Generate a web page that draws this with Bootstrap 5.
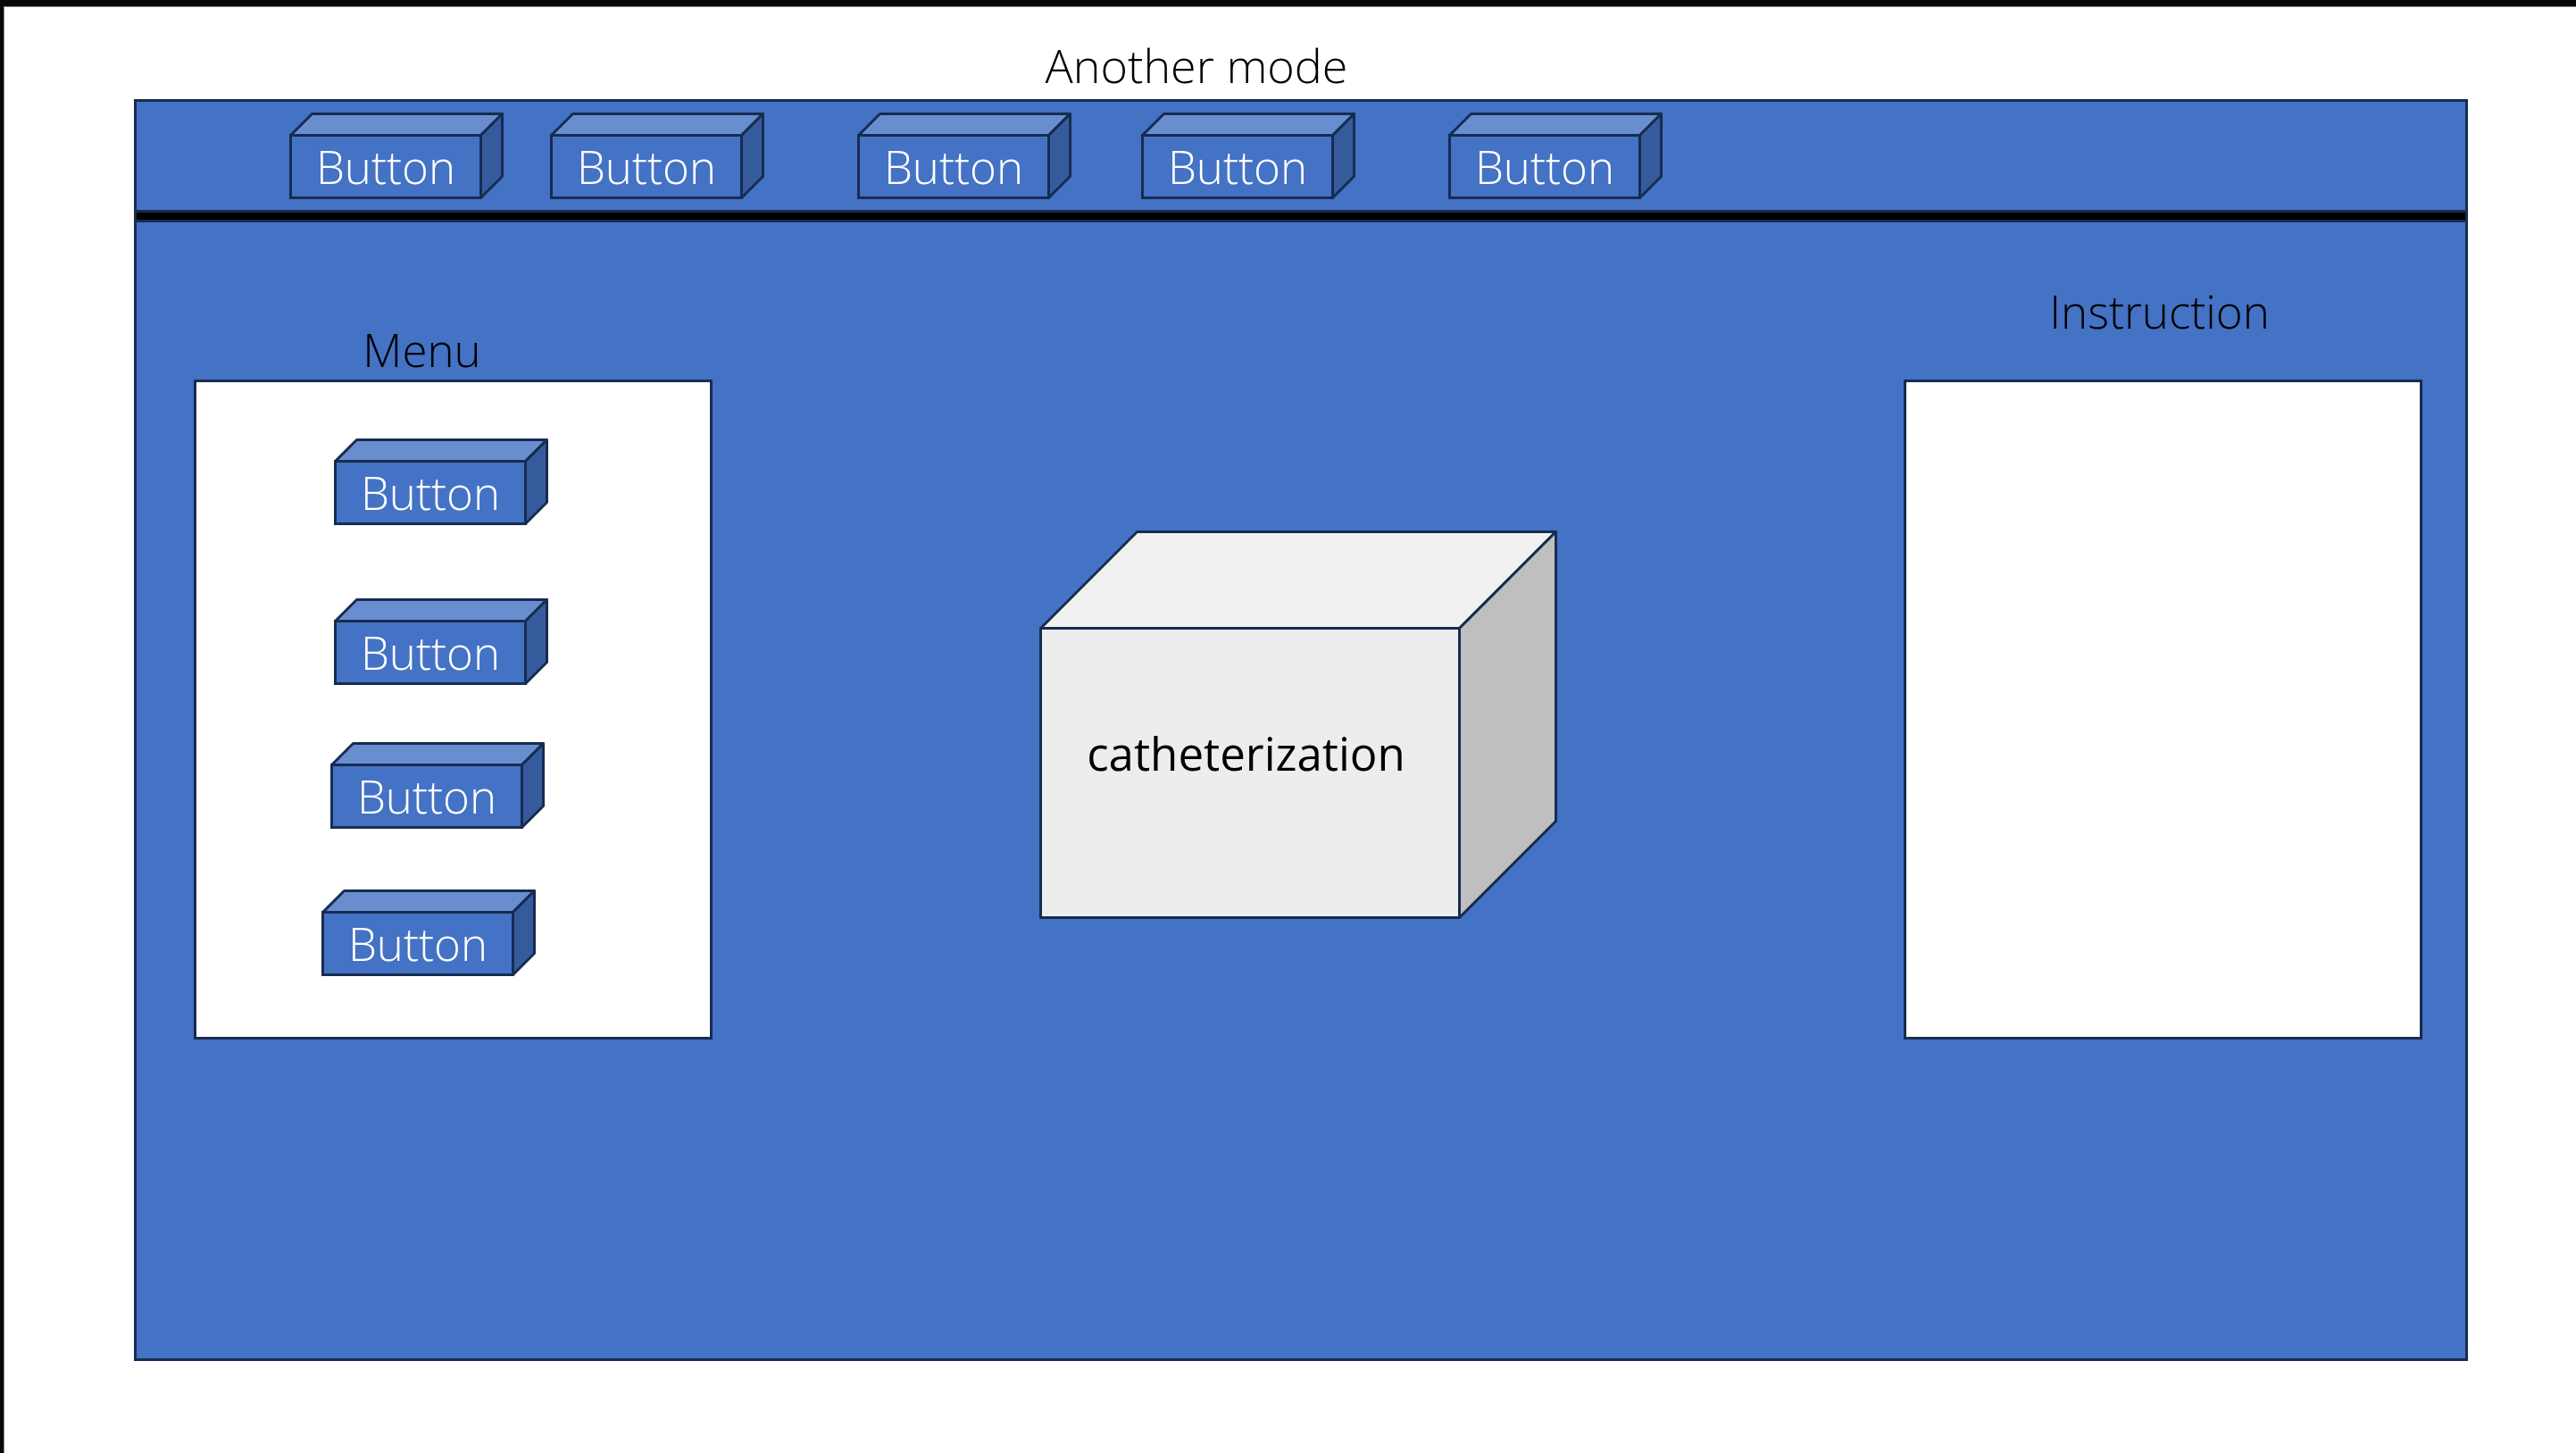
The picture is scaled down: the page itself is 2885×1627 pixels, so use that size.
<!DOCTYPE html>
<html lang="en">
<head>
<meta charset="utf-8">
<meta name="viewport" content="width=device-width, initial-scale=1">
<title>Another mode</title>
<link href="https://cdn.jsdelivr.net/npm/bootstrap@5.3.0/dist/css/bootstrap.min.css" rel="stylesheet">
<style>
  :root { --ink: #172c51; --board: #4472c4; }
  body {
    font-family: "Open Sans", "Noto Sans", sans-serif;
    font-size: 51px;
    font-weight: 300;
    line-height: 60px;
    color: #000;
    background: #fff;
  }
  .slide {
    border-top: 7px solid #080808;
    border-left: 4px solid #080808;
    box-shadow: inset 1px 1px 0 #8a8a8a;
    padding: 36px 121px 103px 146px;
  }
  .slide-title, .panel-title { font: inherit; margin: 0; }
  .slide-title { font-size: 52px; padding-right: 234px; margin-bottom: 8px; }
  .board { background: var(--board); border: 3px solid var(--ink); }
  .toolbar { padding: 12px 24px 12px 171px; }
  .divider { height: 14px; background: #000; border: solid var(--ink); border-width: 3px 0; }
  .stage { padding: 69px 48px 0 64px; }
  .panel { width: 581px; }
  .panel-box { height: 739px; background: #fff; border: 3px solid var(--ink); }
  .menu-title { padding-right: 70px; margin-bottom: 4px; }
  .instruction-title { padding-right: 8px; margin-bottom: 47px; }
  .menu-list { padding: 63px 0 0 140px; }

  /* Extruded blocks: outline drawn by an SVG behind the label */
  .block3d {
    position: relative;
    flex: none;
    border: 0;
    border-radius: 0;
    background: none;
    font-size: inherit;
    line-height: inherit;
  }
  .block3d svg { position: absolute; inset: 0; width: 100%; height: 100%; }
  .block3d span { position: relative; }
  .edges { stroke: var(--ink); stroke-width: 3; stroke-linejoin: round; }
  .block-btn, .block-btn:hover, .block-btn:active {
    width: 240px;
    height: 97px;
    padding: 22px 24px 0 0;
    color: #fff;
    font-weight: 300;
  }
  .block-cube { width: 580px; height: 435px; padding: 108px 116px 46px 0; font-weight: 400; }
  .cube-area { padding: 0 23px 135px 0; }
  .gap-52 { margin-left: 52px; }
  .gap-104 { margin-left: 104px; }
  .gap-78 { margin-left: 78px; }
  .drop-82 { margin-top: 82px; }
  .drop-64 { margin-top: 64px; }
  .drop-68 { margin-top: 68px; }
  .indent-a { margin-left: 14px; }
  .indent-b { margin-left: 10px; }
</style>
<script src="https://cdn.jsdelivr.net/npm/bootstrap@5.3.0/dist/js/bootstrap.bundle.min.js"></script>
</head>
<body>
<svg class="d-none" aria-hidden="true">
  <symbol id="btn-shape" viewBox="0 0 240 97">
    <g class="edges">
      <path fill="#698ed0" d="M1.5 25.5 25.5 1.5H238.5L214.5 25.5Z"/>
      <path fill="#365b9d" d="M214.5 25.5 238.5 1.5V71.5L214.5 95.5Z"/>
      <path fill="#4472c4" stroke-linejoin="miter" d="M1.5 25.5H214.5V95.5H1.5Z"/>
    </g>
  </symbol>
</svg>
<div class="slide d-flex flex-column min-vh-100">
  <h1 class="slide-title text-center">Another mode</h1>
  <main class="board d-flex flex-column flex-grow-1">
    <nav class="toolbar d-flex" aria-label="Modes">
      <button type="button" class="btn block3d block-btn"><svg aria-hidden="true"><use href="#btn-shape"/></svg><span>Button</span></button>
      <button type="button" class="btn block3d block-btn gap-52"><svg aria-hidden="true"><use href="#btn-shape"/></svg><span>Button</span></button>
      <button type="button" class="btn block3d block-btn gap-104"><svg aria-hidden="true"><use href="#btn-shape"/></svg><span>Button</span></button>
      <button type="button" class="btn block3d block-btn gap-78"><svg aria-hidden="true"><use href="#btn-shape"/></svg><span>Button</span></button>
      <button type="button" class="btn block3d block-btn gap-104"><svg aria-hidden="true"><use href="#btn-shape"/></svg><span>Button</span></button>
    </nav>
    <div class="divider"></div>
    <div class="stage d-flex align-items-end">
      <section class="panel flex-shrink-0" aria-labelledby="menu-title">
        <h2 id="menu-title" class="panel-title menu-title text-center">Menu</h2>
        <div class="panel-box menu-list d-flex flex-column align-items-start">
          <button type="button" class="btn block3d block-btn indent-a"><svg aria-hidden="true"><use href="#btn-shape"/></svg><span>Button</span></button>
          <button type="button" class="btn block3d block-btn drop-82 indent-a"><svg aria-hidden="true"><use href="#btn-shape"/></svg><span>Button</span></button>
          <button type="button" class="btn block3d block-btn drop-64 indent-b"><svg aria-hidden="true"><use href="#btn-shape"/></svg><span>Button</span></button>
          <button type="button" class="btn block3d block-btn drop-68"><svg aria-hidden="true"><use href="#btn-shape"/></svg><span>Button</span></button>
        </div>
      </section>
      <div class="cube-area flex-grow-1 d-flex justify-content-center">
        <div class="block3d block-cube d-flex align-items-center justify-content-center">
          <svg viewBox="0 0 580 435" aria-hidden="true">
            <g class="edges">
              <path fill="#f1f1f1" d="M1.5 109.5 109.5 1.5H578.5L470.5 109.5Z"/>
              <path fill="#bfbfbf" d="M470.5 109.5 578.5 1.5V325.5L470.5 433.5Z"/>
              <path fill="#ededed" d="M1.5 109.5H470.5V433.5H1.5Z"/>
            </g>
          </svg>
          <span>catheterization</span>
        </div>
      </div>
      <section class="panel flex-shrink-0" aria-labelledby="instruction-title">
        <h2 id="instruction-title" class="panel-title instruction-title text-center">Instruction</h2>
        <div class="panel-box"></div>
      </section>
    </div>
  </main>
</div>
</body>
</html>
